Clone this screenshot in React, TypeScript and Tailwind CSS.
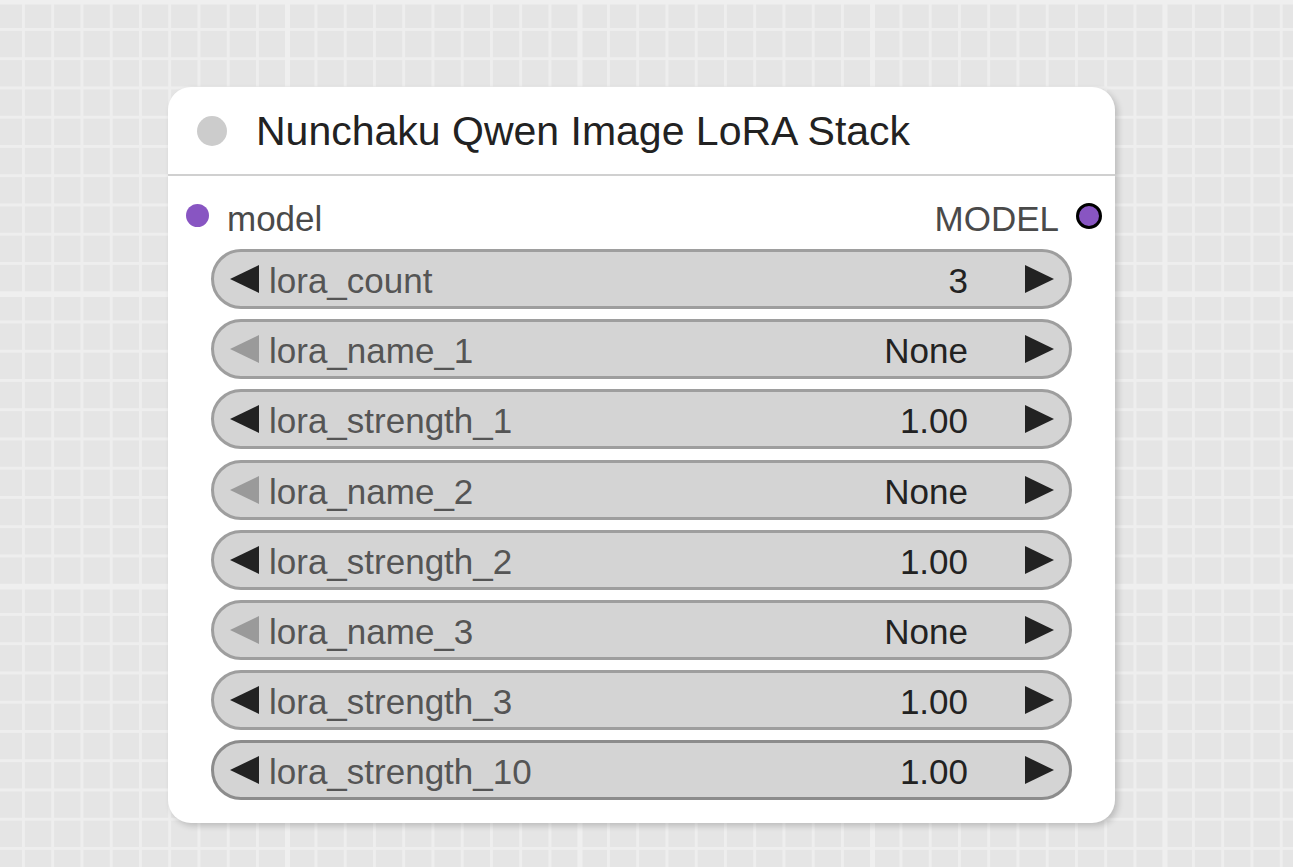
import React from "react";

type W = { label: string; value: string; disabled?: boolean; focused?: boolean };

const widgets: W[] = [
  { label: "lora_count", value: "3" },
  { label: "lora_name_1", value: "None", disabled: true },
  { label: "lora_strength_1", value: "1.00" },
  { label: "lora_name_2", value: "None", disabled: true },
  { label: "lora_strength_2", value: "1.00" },
  { label: "lora_name_3", value: "None", disabled: true },
  { label: "lora_strength_3", value: "1.00" },
  { label: "lora_strength_10", value: "1.00", focused: true },
];

function LeftArrow({ disabled }: { disabled?: boolean }) {
  return (
    <svg width="29" height="28" viewBox="0 0 29 28" className="shrink-0">
      <polygon points="0,14 29,0 29,28" fill={disabled ? "#9a9a9a" : "#222222"} />
    </svg>
  );
}

function RightArrow() {
  return (
    <svg width="29" height="28" viewBox="0 0 29 28" className="shrink-0">
      <polygon points="29,14 0,0 0,28" fill="#222222" />
    </svg>
  );
}

function Widget({ w }: { w: W }) {
  return (
    <div
      className={
        "h-[60px] rounded-full bg-[#d4d4d4] flex items-center pl-[16px] pr-[15px] " +
        (w.focused ? "border-[3px] border-[#8c8c8c]" : "border-[3px] border-[#9e9e9e]")
      }
    >
      <LeftArrow disabled={w.disabled} />
      <span className="ml-[10px] pt-[3px] text-[35px] leading-none text-[#555555]">{w.label}</span>
      <span className="ml-auto pt-[3px] text-[35px] leading-none text-[#222222]">{w.value}</span>
      <span className="ml-[57px] flex">
        <RightArrow />
      </span>
    </div>
  );
}

export default function App() {
  return (
    <div
      className="relative w-[1293px] h-[867px] overflow-hidden bg-[#e5e5e5] [background-image:linear-gradient(to_right,#efefef_5px,transparent_5px),linear-gradient(to_bottom,#efefef_5px,transparent_5px),linear-gradient(to_right,#eeeeee_3px,transparent_3px),linear-gradient(to_bottom,#eeeeee_3px,transparent_3px)] [background-size:292.5px_292.5px,292.5px_292.5px,29.25px_29.25px,29.25px_29.25px] [background-position:285px_-0.5px,285px_-0.5px,22px_-1.25px,22px_-1.25px]"
      style={{ fontFamily: '"Liberation Sans", Arial, sans-serif' }}
    >
      <div className="absolute left-[168px] top-[87px] w-[947px] rounded-[23px] bg-white shadow-[3px_3px_6px_rgba(0,0,0,0.18)] flex flex-col pb-[23px]">
        <div className="h-[89px] flex items-center border-b-[2.5px] border-[#d0d0d0]">
          <div className="ml-[29px] w-[30px] h-[30px] rounded-full bg-[#cccccc]" />
          <span className="ml-[29px] pt-[2px] text-[41px] leading-none text-[#222222]">
            Nunchaku Qwen Image LoRA Stack
          </span>
        </div>
        <div className="mt-[12px] h-[58px] flex items-center">
          <div className="ml-[18px] mb-[3px] w-[23px] h-[23px] rounded-full bg-[#8855c2]" />
          <span className="ml-[18px] pt-[2px] text-[35px] leading-none text-[#4a4a4a]">model</span>
          <span className="ml-auto pt-[2px] text-[35px] leading-none text-[#4a4a4a]">MODEL</span>
          <div className="ml-[17px] mr-[13px] mb-[3px] w-[26px] h-[26px] rounded-full bg-[#8855c2] border-[3px] border-black" />
        </div>
        <div className="mt-[3px] mx-[43px] flex flex-col gap-[10.2px]">
          {widgets.map((w) => (
            <Widget key={w.label} w={w} />
          ))}
        </div>
      </div>
    </div>
  );
}
